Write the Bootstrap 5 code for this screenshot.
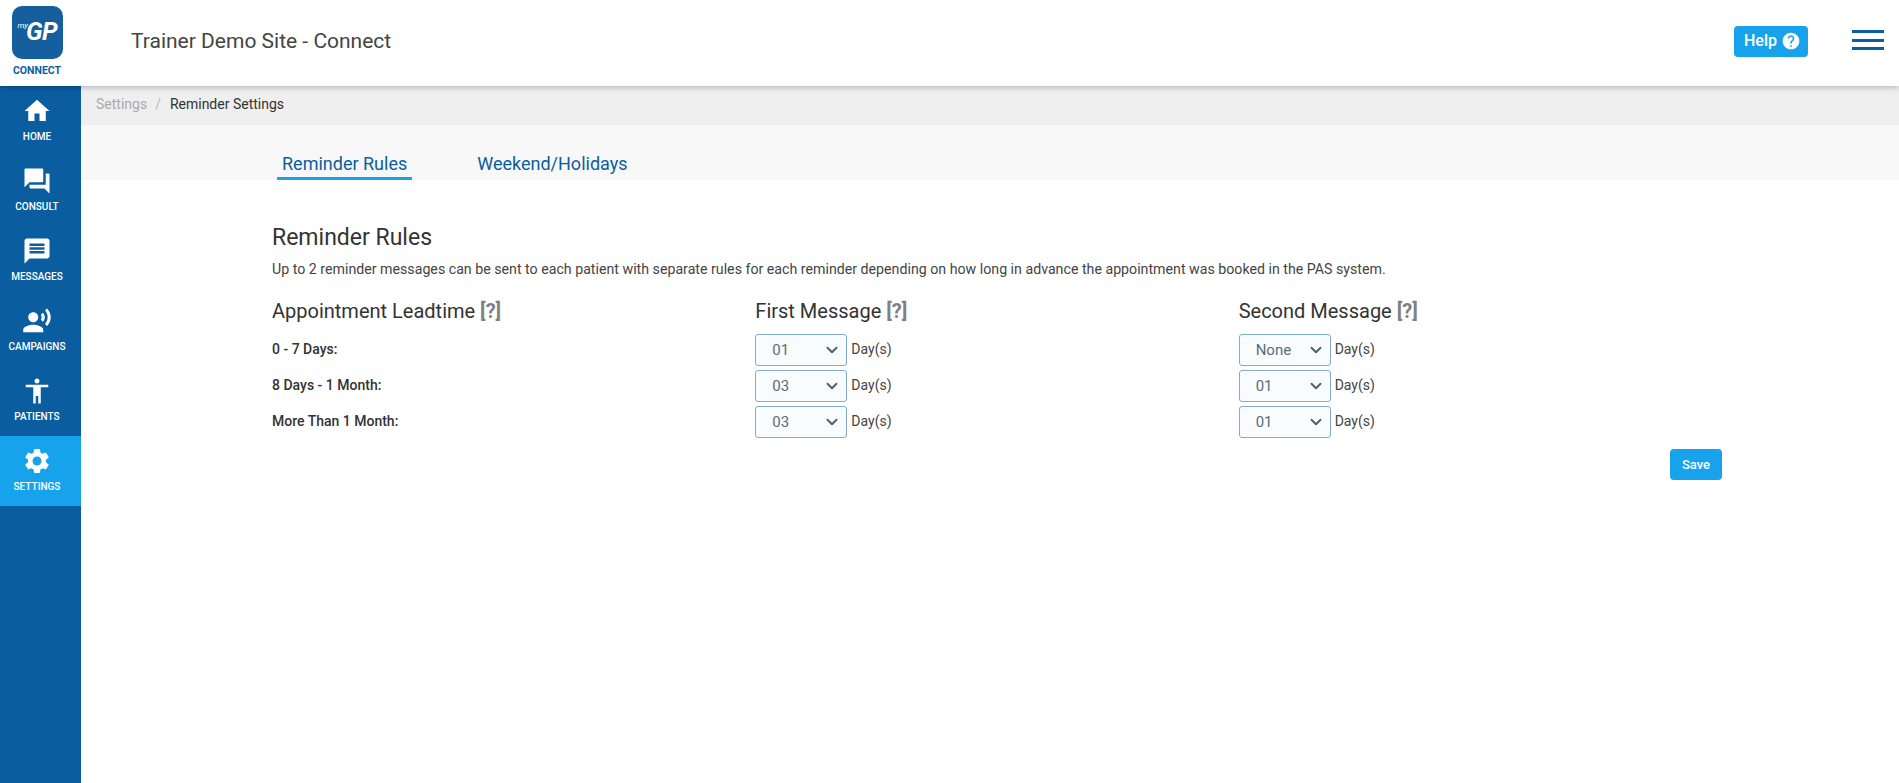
<!DOCTYPE html>
<html lang="en">
<head>
<meta charset="utf-8">
<title>Reminder Settings</title>
<link href="https://cdn.jsdelivr.net/npm/bootstrap@5.3.0/dist/css/bootstrap.min.css" rel="stylesheet">
<style>
html,body{height:100%;}
body{font-family:Roboto,"Liberation Sans",sans-serif;color:#333;background:#fff;overflow:hidden;}
.app-top{height:86px;background:#fff;box-shadow:0 1px 6px rgba(0,0,0,.28);position:relative;z-index:2;}
.brand-box{width:81px;padding:6px 7px 0 0;}
.brand-tile{width:51px;height:53px;background:#155f9f;border-radius:10px;color:#fff;font-style:italic;font-weight:700;padding:13px 0 0 6px;line-height:1;white-space:nowrap;}
.brand-my{font-size:8px;font-weight:400;vertical-align:12px;margin-right:-2px;}
.brand-gp{font-size:25px;letter-spacing:-.5px;}
.brand-name{font-size:10.5px;font-weight:700;color:#0a5ea0;line-height:12px;margin-top:6px;}
.site-title{font-size:21px;color:#444;margin-left:50px;padding-bottom:3px;}
.help-btn{background:#17a3eb;color:#fff;border:0;border-radius:4px;width:74px;height:31px;font-size:16px;font-weight:500;padding:0 0 0 3px;margin-right:44px;margin-top:-4px;}
.help-btn svg{width:20px;height:20px;fill:#fff;}
.burger{width:32px;height:20px;margin-right:15px;margin-top:-6px;}
.burger i{display:block;height:3px;background:#0a5ea0;}
.app-body{height:calc(100% - 86px);}
.side{width:81px;background:#0a5ea0;flex-shrink:0;}
.side-item{height:70px;padding:10px 7px 0 0;color:#fff;text-decoration:none;font-size:10px;font-weight:500;line-height:12px;text-transform:uppercase;}
.side-item:hover{color:#fff;}
.side-item svg{width:30px;height:30px;fill:#fff;margin-bottom:5px;}
.side-item.is-on{background:#17a3eb;}
.crumbs{height:39px;background:#efefef;padding:0 0 2px 15px;font-size:14px;}
.crumbs .breadcrumb-item.active{color:#333;}
.crumbs .breadcrumb-item a{color:#aaa;text-decoration:none;}
.crumbs .breadcrumb-item+.breadcrumb-item{padding-left:8px;}
.crumbs .breadcrumb-item+.breadcrumb-item::before{color:#bbb;padding-right:9px;}
.tab-band{height:55px;background:#f8f8f8;padding-left:196px;}
.tab-band .nav-link{color:#0a5ea0;font-size:18px;padding:3px 5px 0;height:35px;line-height:32px;margin-right:60px;border-bottom:3px solid #f8f8f8;}
.tab-band .nav-link.active{border-bottom-color:#17a3eb;}
.sheet{width:1450px;margin-left:191px;padding-top:44px;}
.sheet-title{font-size:23px;font-weight:400;line-height:28px;color:#333;margin:0 0 8px;}
.sheet-note{font-size:14.2px;line-height:18px;margin:0 0 21px;color:#444;}
.col-head{font-size:20px;font-weight:400;line-height:24px;margin:0 0 9px;color:#333;}
.col-head b{color:#808080;font-weight:700;}
.rule-row{height:36px;}
.rule-label{font-size:14px;font-weight:500;color:#333;padding-bottom:1px;}
.day-select.form-select{width:92px;height:32px;font-size:15px;color:#5c6b78;background-color:#f9fcff;border:1px solid #85aad0;border-radius:3px;padding:0 0 0 16px;background-position:right 6px center;line-height:30px;background-image:url("data:image/svg+xml,%3csvg xmlns='http://www.w3.org/2000/svg' viewBox='0 0 16 16'%3e%3cpath fill='none' stroke='%234f6272' stroke-linecap='round' stroke-linejoin='round' stroke-width='2.6' d='m2 5 6 6 6-6'/%3e%3c/svg%3e");}
.day-word{font-size:14px;color:#444;margin-left:4px;padding-bottom:2px;}
.save-btn{background:#17a3eb;color:#fff;border:0;border-radius:4px;width:52px;height:31px;font-size:13px;font-weight:500;padding:0;margin-top:9px;}
</style>
</head>
<body>
<header class="app-top d-flex align-items-center">
  <div class="brand-box d-flex flex-column align-items-center align-self-start">
    <div class="brand-tile"><span class="brand-my">my</span><span class="brand-gp">GP</span></div>
    <div class="brand-name">CONNECT</div>
  </div>
  <div class="site-title flex-grow-1">Trainer Demo Site - Connect</div>
  <button type="button" class="btn help-btn d-flex align-items-center justify-content-center gap-1">Help
    <svg viewBox="0 0 24 24"><path d="M12 2C6.48 2 2 6.48 2 12s4.48 10 10 10 10-4.48 10-10S17.52 2 12 2zm1 17h-2v-2h2v2zm2.07-7.75l-.9.92C13.45 12.9 13 13.5 13 15h-2v-.5c0-1.1.45-2.1 1.17-2.83l1.24-1.26c.37-.36.59-.86.59-1.41 0-1.1-.9-2-2-2s-2 .9-2 2H8c0-2.21 1.79-4 4-4s4 1.79 4 4c0 .88-.36 1.68-.93 2.25z"/></svg>
  </button>
  <div class="burger d-flex flex-column justify-content-between"><i></i><i></i><i></i></div>
</header>
<div class="app-body d-flex">
  <nav class="side d-flex flex-column">
    <a class="side-item d-flex flex-column align-items-center" href="#"><svg viewBox="0 0 24 24"><path d="M10 20v-6h4v6h5v-8h3L12 3 2 12h3v8z"/></svg>Home</a>
    <a class="side-item d-flex flex-column align-items-center" href="#"><svg viewBox="0 0 24 24"><path d="M21 6h-2v9H6v2c0 .55.45 1 1 1h11l4 4V7c0-.55-.45-1-1-1zm-4 6V3c0-.55-.45-1-1-1H3c-.55 0-1 .45-1 1v14l4-4h10c.55 0 1-.45 1-1z"/></svg>Consult</a>
    <a class="side-item d-flex flex-column align-items-center" href="#"><svg viewBox="0 0 24 24"><path d="M20 2H4c-1.1 0-1.99.9-1.99 2L2 22l4-4h14c1.1 0 2-.9 2-2V4c0-1.1-.9-2-2-2zm-2 12H6v-2h12v2zm0-3H6V9h12v2zm0-3H6V6h12v2z"/></svg>Messages</a>
    <a class="side-item d-flex flex-column align-items-center" href="#"><svg viewBox="0 0 24 24"><path d="M9 13c2.21 0 4-1.79 4-4s-1.79-4-4-4-4 1.79-4 4 1.79 4 4 4zm0 2c-2.67 0-8 1.34-8 4v2h16v-2c0-2.66-5.33-4-8-4zm7.76-9.64l-1.68 1.69c.84 1.18.84 2.71 0 3.89l1.68 1.69c2.02-2.02 2.02-5.07 0-7.27zM20.07 2l-1.63 1.63c2.77 3.02 2.77 7.56 0 10.74L20.07 16c3.9-3.89 3.91-9.95 0-14z"/></svg>Campaigns</a>
    <a class="side-item d-flex flex-column align-items-center" href="#"><svg viewBox="0 0 24 24"><path d="M12 2c1.1 0 2 .9 2 2s-.9 2-2 2-2-.9-2-2 .9-2 2-2zm9 7h-6v13h-2v-6h-2v6H9V9H3V7h18v2z"/></svg>Patients</a>
    <a class="side-item is-on d-flex flex-column align-items-center" href="#"><svg viewBox="0 0 24 24"><path d="M19.14 12.94c.04-.3.06-.61.06-.94 0-.32-.02-.64-.07-.94l2.03-1.58c.18-.14.23-.41.12-.61l-1.92-3.32c-.12-.22-.37-.29-.59-.22l-2.39.96c-.5-.38-1.03-.7-1.62-.94l-.36-2.54c-.04-.24-.24-.41-.48-.41h-3.84c-.24 0-.43.17-.47.41l-.36 2.54c-.59.24-1.13.57-1.62.94l-2.39-.96c-.22-.08-.47 0-.59.22L2.74 8.87c-.12.21-.08.47.12.61l2.03 1.58c-.05.3-.09.63-.09.94s.02.64.07.94l-2.03 1.58c-.18.14-.23.41-.12.61l1.92 3.32c.12.22.37.29.59.22l2.39-.96c.5.38 1.03.7 1.62.94l.36 2.54c.05.24.24.41.48.41h3.84c.24 0 .44-.17.47-.41l.36-2.54c.59-.24 1.13-.56 1.62-.94l2.39.96c.22.08.47 0 .59-.22l1.92-3.32c.12-.22.07-.47-.12-.61l-2.01-1.58zM12 15.6c-1.98 0-3.6-1.62-3.6-3.6s1.62-3.6 3.6-3.6 3.6 1.62 3.6 3.6-1.62 3.6-3.6 3.6z"/></svg>Settings</a>
  </nav>
  <main class="flex-grow-1">
    <ol class="breadcrumb crumbs align-items-center mb-0">
      <li class="breadcrumb-item"><a href="#">Settings</a></li>
      <li class="breadcrumb-item active">Reminder Settings</li>
    </ol>
    <div class="tab-band d-flex align-items-end">
      <ul class="nav">
        <li class="nav-item"><a class="nav-link active" href="#">Reminder Rules</a></li>
        <li class="nav-item"><a class="nav-link" href="#">Weekend/Holidays</a></li>
      </ul>
    </div>
    <section class="sheet">
      <h2 class="sheet-title">Reminder Rules</h2>
      <p class="sheet-note">Up to 2 reminder messages can be sent to each patient with separate rules for each reminder depending on how long in advance the appointment was booked in the PAS system.</p>
      <div class="row g-0">
        <div class="col-4"><h3 class="col-head">Appointment Leadtime <b>[?]</b></h3></div>
        <div class="col-4"><h3 class="col-head">First Message <b>[?]</b></h3></div>
        <div class="col-4"><h3 class="col-head">Second Message <b>[?]</b></h3></div>
      </div>
      <div class="row g-0 rule-row align-items-center">
        <div class="col-4 rule-label">0 - 7 Days:</div>
        <div class="col-4 d-flex align-items-center"><select class="form-select day-select"><option>01</option></select><span class="day-word">Day(s)</span></div>
        <div class="col-4 d-flex align-items-center"><select class="form-select day-select"><option>None</option></select><span class="day-word">Day(s)</span></div>
      </div>
      <div class="row g-0 rule-row align-items-center">
        <div class="col-4 rule-label">8 Days - 1 Month:</div>
        <div class="col-4 d-flex align-items-center"><select class="form-select day-select"><option>03</option></select><span class="day-word">Day(s)</span></div>
        <div class="col-4 d-flex align-items-center"><select class="form-select day-select"><option>01</option></select><span class="day-word">Day(s)</span></div>
      </div>
      <div class="row g-0 rule-row align-items-center">
        <div class="col-4 rule-label">More Than 1 Month:</div>
        <div class="col-4 d-flex align-items-center"><select class="form-select day-select"><option>03</option></select><span class="day-word">Day(s)</span></div>
        <div class="col-4 d-flex align-items-center"><select class="form-select day-select"><option>01</option></select><span class="day-word">Day(s)</span></div>
      </div>
      <div class="d-flex justify-content-end"><button type="button" class="btn save-btn">Save</button></div>
    </section>
  </main>
</div>
<script src="https://cdn.jsdelivr.net/npm/bootstrap@5.3.0/dist/js/bootstrap.bundle.min.js"></script>
</body>
</html>
